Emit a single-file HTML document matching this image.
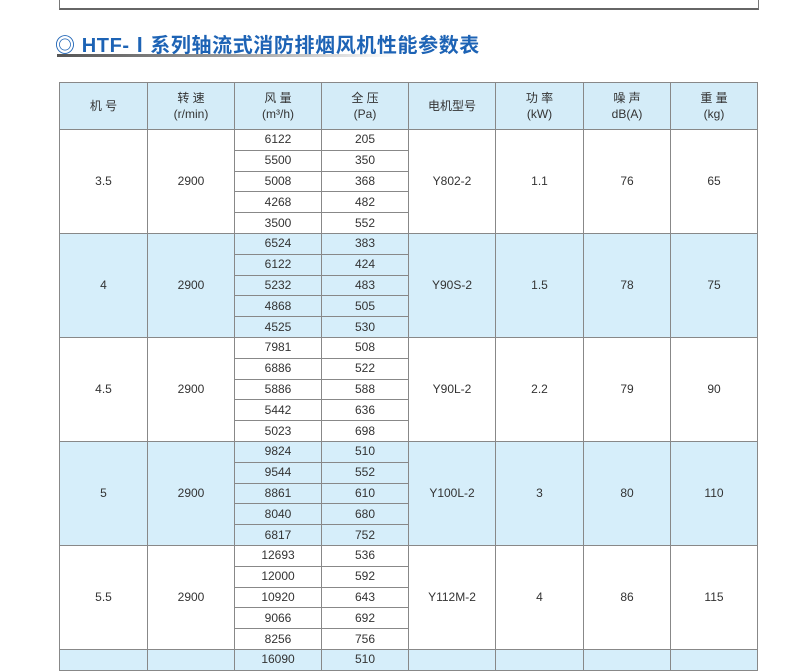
<!DOCTYPE html>
<html><head><meta charset="utf-8"><style>
body{margin:0;width:790px;height:659px;background:#fff;overflow:hidden;position:relative;font-family:"Liberation Sans","Noto Sans CJK SC",sans-serif;}
.top{position:absolute;left:59px;top:-4px;width:698px;height:12px;border:1px solid #777;border-top:none;border-bottom:2px solid #666;}
.title{position:absolute;left:55px;top:29px;font-size:20px;color:#1d63b5;font-weight:bold;white-space:nowrap;letter-spacing:0.6px;}
.uline{position:absolute;left:57px;top:54px;width:340px;height:3px;background:linear-gradient(90deg,#555,#999 50%,rgba(200,200,200,0));}
table{position:absolute;left:59px;top:82px;border-collapse:collapse;table-layout:fixed;width:699px;font-size:12px;color:#333;}
td{border:1px solid #888;text-align:center;padding:0;height:19.8px;line-height:13px;}
tr.h td{height:46px;background:#d4ecf8;font-size:12px;line-height:16px;}
.b td{background:#d6eefa;}
</style></head><body>
<div class="top"></div>
<div class="title">◎ HTF-Ⅰ系列轴流式消防排烟风机性能参数表</div>
<div class="uline"></div>
<table>
<colgroup><col style="width:88px"><col style="width:87px"><col style="width:87px"><col style="width:87px"><col style="width:87px"><col style="width:88px"><col style="width:87px"><col style="width:87px"></colgroup>
<tr class="h"><td>机 号</td><td>转 速<br>(r/min)</td><td>风 量<br>(m³/h)</td><td>全 压<br>(Pa)</td><td>电机型号</td><td>功 率<br>(kW)</td><td>噪 声<br>dB(A)</td><td>重 量<br>(kg)</td></tr>
<tbody>
<tr><td rowspan="5">3.5</td><td rowspan="5">2900</td><td>6122</td><td>205</td><td rowspan="5">Y802-2</td><td rowspan="5">1.1</td><td rowspan="5">76</td><td rowspan="5">65</td></tr>
<tr><td>5500</td><td>350</td></tr><tr><td>5008</td><td>368</td></tr><tr><td>4268</td><td>482</td></tr><tr><td>3500</td><td>552</td></tr>
</tbody>
<tbody class="b">
<tr><td rowspan="5">4</td><td rowspan="5">2900</td><td>6524</td><td>383</td><td rowspan="5">Y90S-2</td><td rowspan="5">1.5</td><td rowspan="5">78</td><td rowspan="5">75</td></tr>
<tr><td>6122</td><td>424</td></tr><tr><td>5232</td><td>483</td></tr><tr><td>4868</td><td>505</td></tr><tr><td>4525</td><td>530</td></tr>
</tbody>
<tbody>
<tr><td rowspan="5">4.5</td><td rowspan="5">2900</td><td>7981</td><td>508</td><td rowspan="5">Y90L-2</td><td rowspan="5">2.2</td><td rowspan="5">79</td><td rowspan="5">90</td></tr>
<tr><td>6886</td><td>522</td></tr><tr><td>5886</td><td>588</td></tr><tr><td>5442</td><td>636</td></tr><tr><td>5023</td><td>698</td></tr>
</tbody>
<tbody class="b">
<tr><td rowspan="5">5</td><td rowspan="5">2900</td><td>9824</td><td>510</td><td rowspan="5">Y100L-2</td><td rowspan="5">3</td><td rowspan="5">80</td><td rowspan="5">110</td></tr>
<tr><td>9544</td><td>552</td></tr><tr><td>8861</td><td>610</td></tr><tr><td>8040</td><td>680</td></tr><tr><td>6817</td><td>752</td></tr>
</tbody>
<tbody>
<tr><td rowspan="5">5.5</td><td rowspan="5">2900</td><td>12693</td><td>536</td><td rowspan="5">Y112M-2</td><td rowspan="5">4</td><td rowspan="5">86</td><td rowspan="5">115</td></tr>
<tr><td>12000</td><td>592</td></tr><tr><td>10920</td><td>643</td></tr><tr><td>9066</td><td>692</td></tr><tr><td>8256</td><td>756</td></tr>
</tbody>
<tbody class="b">
<tr><td></td><td></td><td>16090</td><td>510</td><td></td><td></td><td></td><td></td></tr>
</tbody>
</table>
</body></html>
